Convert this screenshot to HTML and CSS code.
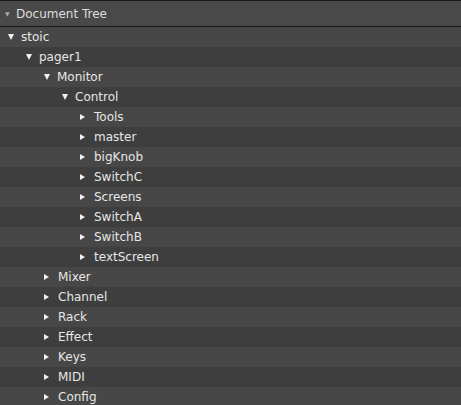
FILE: index.html
```html
<!DOCTYPE html>
<html>
<head>
<meta charset="utf-8">
<link rel="stylesheet" href="styles.css">
</head>
<body>
<div class="panel">
  <div class="header"><span class="htri">&#9660;</span><span class="htitle">Document Tree</span></div>
  <ul class="tree">
    <li class="row l0"><span class="tri down"></span>stoic</li>
    <li class="row l1"><span class="tri down"></span>pager1</li>
    <li class="row l2"><span class="tri down"></span>Monitor</li>
    <li class="row l3"><span class="tri down"></span>Control</li>
    <li class="row l4"><span class="tri right"></span>Tools</li>
    <li class="row l4"><span class="tri right"></span>master</li>
    <li class="row l4"><span class="tri right"></span>bigKnob</li>
    <li class="row l4"><span class="tri right"></span>SwitchC</li>
    <li class="row l4"><span class="tri right"></span>Screens</li>
    <li class="row l4"><span class="tri right"></span>SwitchA</li>
    <li class="row l4"><span class="tri right"></span>SwitchB</li>
    <li class="row l4"><span class="tri right"></span>textScreen</li>
    <li class="row l2"><span class="tri right"></span>Mixer</li>
    <li class="row l2"><span class="tri right"></span>Channel</li>
    <li class="row l2"><span class="tri right"></span>Rack</li>
    <li class="row l2"><span class="tri right"></span>Effect</li>
    <li class="row l2"><span class="tri right"></span>Keys</li>
    <li class="row l2"><span class="tri right"></span>MIDI</li>
    <li class="row l2"><span class="tri right"></span>Config</li>
  </ul>
</div>
</body>
</html>
```
FILE: styles.css
```css
html, body {
  margin: 0;
  padding: 0;
  background: #3f3f3f;
}
body {
  font-family: "DejaVu Sans", "Open Sans", sans-serif;
  font-size: 12px;
  color: #e6e6e6;
  overflow: hidden;
}
.panel {
  width: 461px;
  height: 405px;
  overflow: hidden;
}
.header {
  height: 25px;
  border-top: 1px solid #1c1c1c;
  border-bottom: 1px solid #1a1a1a;
  background: #494949;
  display: flex;
  align-items: center;
  box-sizing: content-box;
}
.htri {
  font-size: 6px;
  color: #a8a8a8;
  margin-left: 5px;
  width: 11px;
}
.htitle {
  color: #dedede;
}
.tree {
  list-style: none;
  margin: 0;
  padding: 0;
}
.row {
  height: 20px;
  display: flex;
  align-items: center;
  background: #3e3e3e;
}
.row:nth-child(odd) {
  background: #474747;
}
.tri {
  width: 0;
  height: 0;
}
.tri.down {
  border-left: 3.5px solid transparent;
  border-right: 3.5px solid transparent;
  border-top: 6px solid #f2f2f2;
  margin-left: 1px;
  margin-right: 7px;
}
.tri.right {
  border-top: 3.5px solid transparent;
  border-bottom: 3.5px solid transparent;
  border-left: 5px solid #f2f2f2;
  margin-left: 1px;
  margin-right: 9px;
}
.l0 { padding-left: 7px; }
.l1 { padding-left: 25px; }
.l2 { padding-left: 43px; }
.l3 { padding-left: 61px; }
.l4 { padding-left: 79px; }
```
